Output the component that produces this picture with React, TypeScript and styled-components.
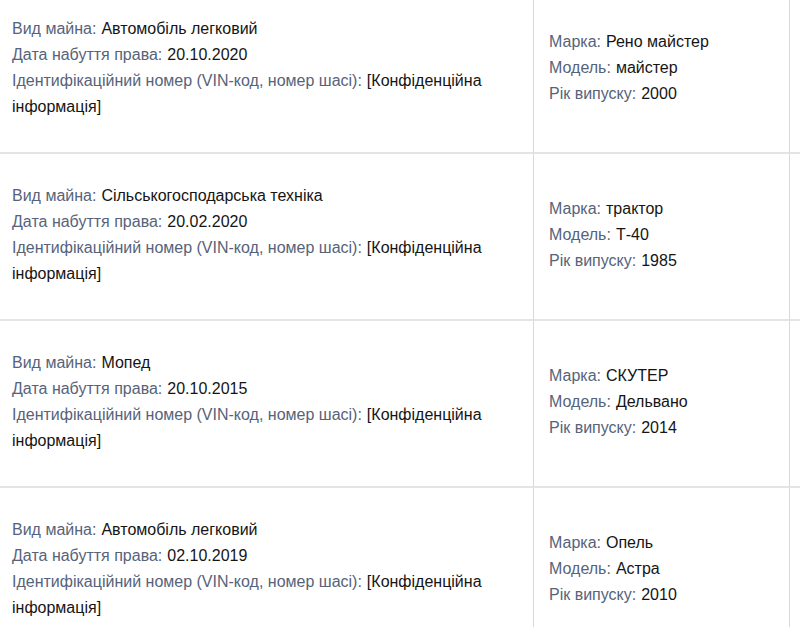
import React from "react";
import styled, { createGlobalStyle } from "styled-components";

const Global = createGlobalStyle`
  html, body { margin: 0; padding: 0; background: #fff; }
  body { font-family: "Liberation Sans", Arial, sans-serif; overflow: hidden; }
`;

const Table = styled.div`
  display: grid;
  grid-template-columns: 534px 256px 1fr;
  margin-top: -13px;
`;

const Cell = styled.div<{ $pad: number }>`
  height: 167px;
  box-sizing: border-box;
  display: flex;
  flex-direction: column;
  justify-content: center;
  padding: 0 10px 4px ${(p) => p.$pad}px;
  border-right: 1px solid #d6dae1;
  border-bottom: 2px solid #e2e4e8;
`;

const Line = styled.div`
  font-size: 16px;
  line-height: 26px;
  color: #151515;
`;

const Label = styled.span`
  color: #56637a;
  margin-right: 5px;
`;

type Item = {
  kind: string;
  date: string;
  brand: string;
  model: string;
  year: string;
};

const items: Item[] = [
  { kind: "Автомобіль легковий", date: "20.10.2020", brand: "Рено майстер", model: "майстер", year: "2000" },
  { kind: "Сільськогосподарська техніка", date: "20.02.2020", brand: "трактор", model: "Т-40", year: "1985" },
  { kind: "Мопед", date: "20.10.2015", brand: "СКУТЕР", model: "Дельвано", year: "2014" },
  { kind: "Автомобіль легковий", date: "02.10.2019", brand: "Опель", model: "Астра", year: "2010" },
];

export default function App() {
  return (
    <>
      <Global />
      <Table>
        {items.map((it, i) => (
          <React.Fragment key={i}>
            <Cell $pad={12}>
              <Line>
                <Label>Вид майна:</Label>
                {it.kind}
              </Line>
              <Line>
                <Label>Дата набуття права:</Label>
                {it.date}
              </Line>
              <Line>
                <Label>Ідентифікаційний номер (VIN-код, номер шасі):</Label>
                [Конфіденційна інформація]
              </Line>
            </Cell>
            <Cell $pad={15}>
              <Line>
                <Label>Марка:</Label>
                {it.brand}
              </Line>
              <Line>
                <Label>Модель:</Label>
                {it.model}
              </Line>
              <Line>
                <Label>Рік випуску:</Label>
                {it.year}
              </Line>
            </Cell>
            <Cell $pad={0} />
          </React.Fragment>
        ))}
      </Table>
    </>
  );
}
